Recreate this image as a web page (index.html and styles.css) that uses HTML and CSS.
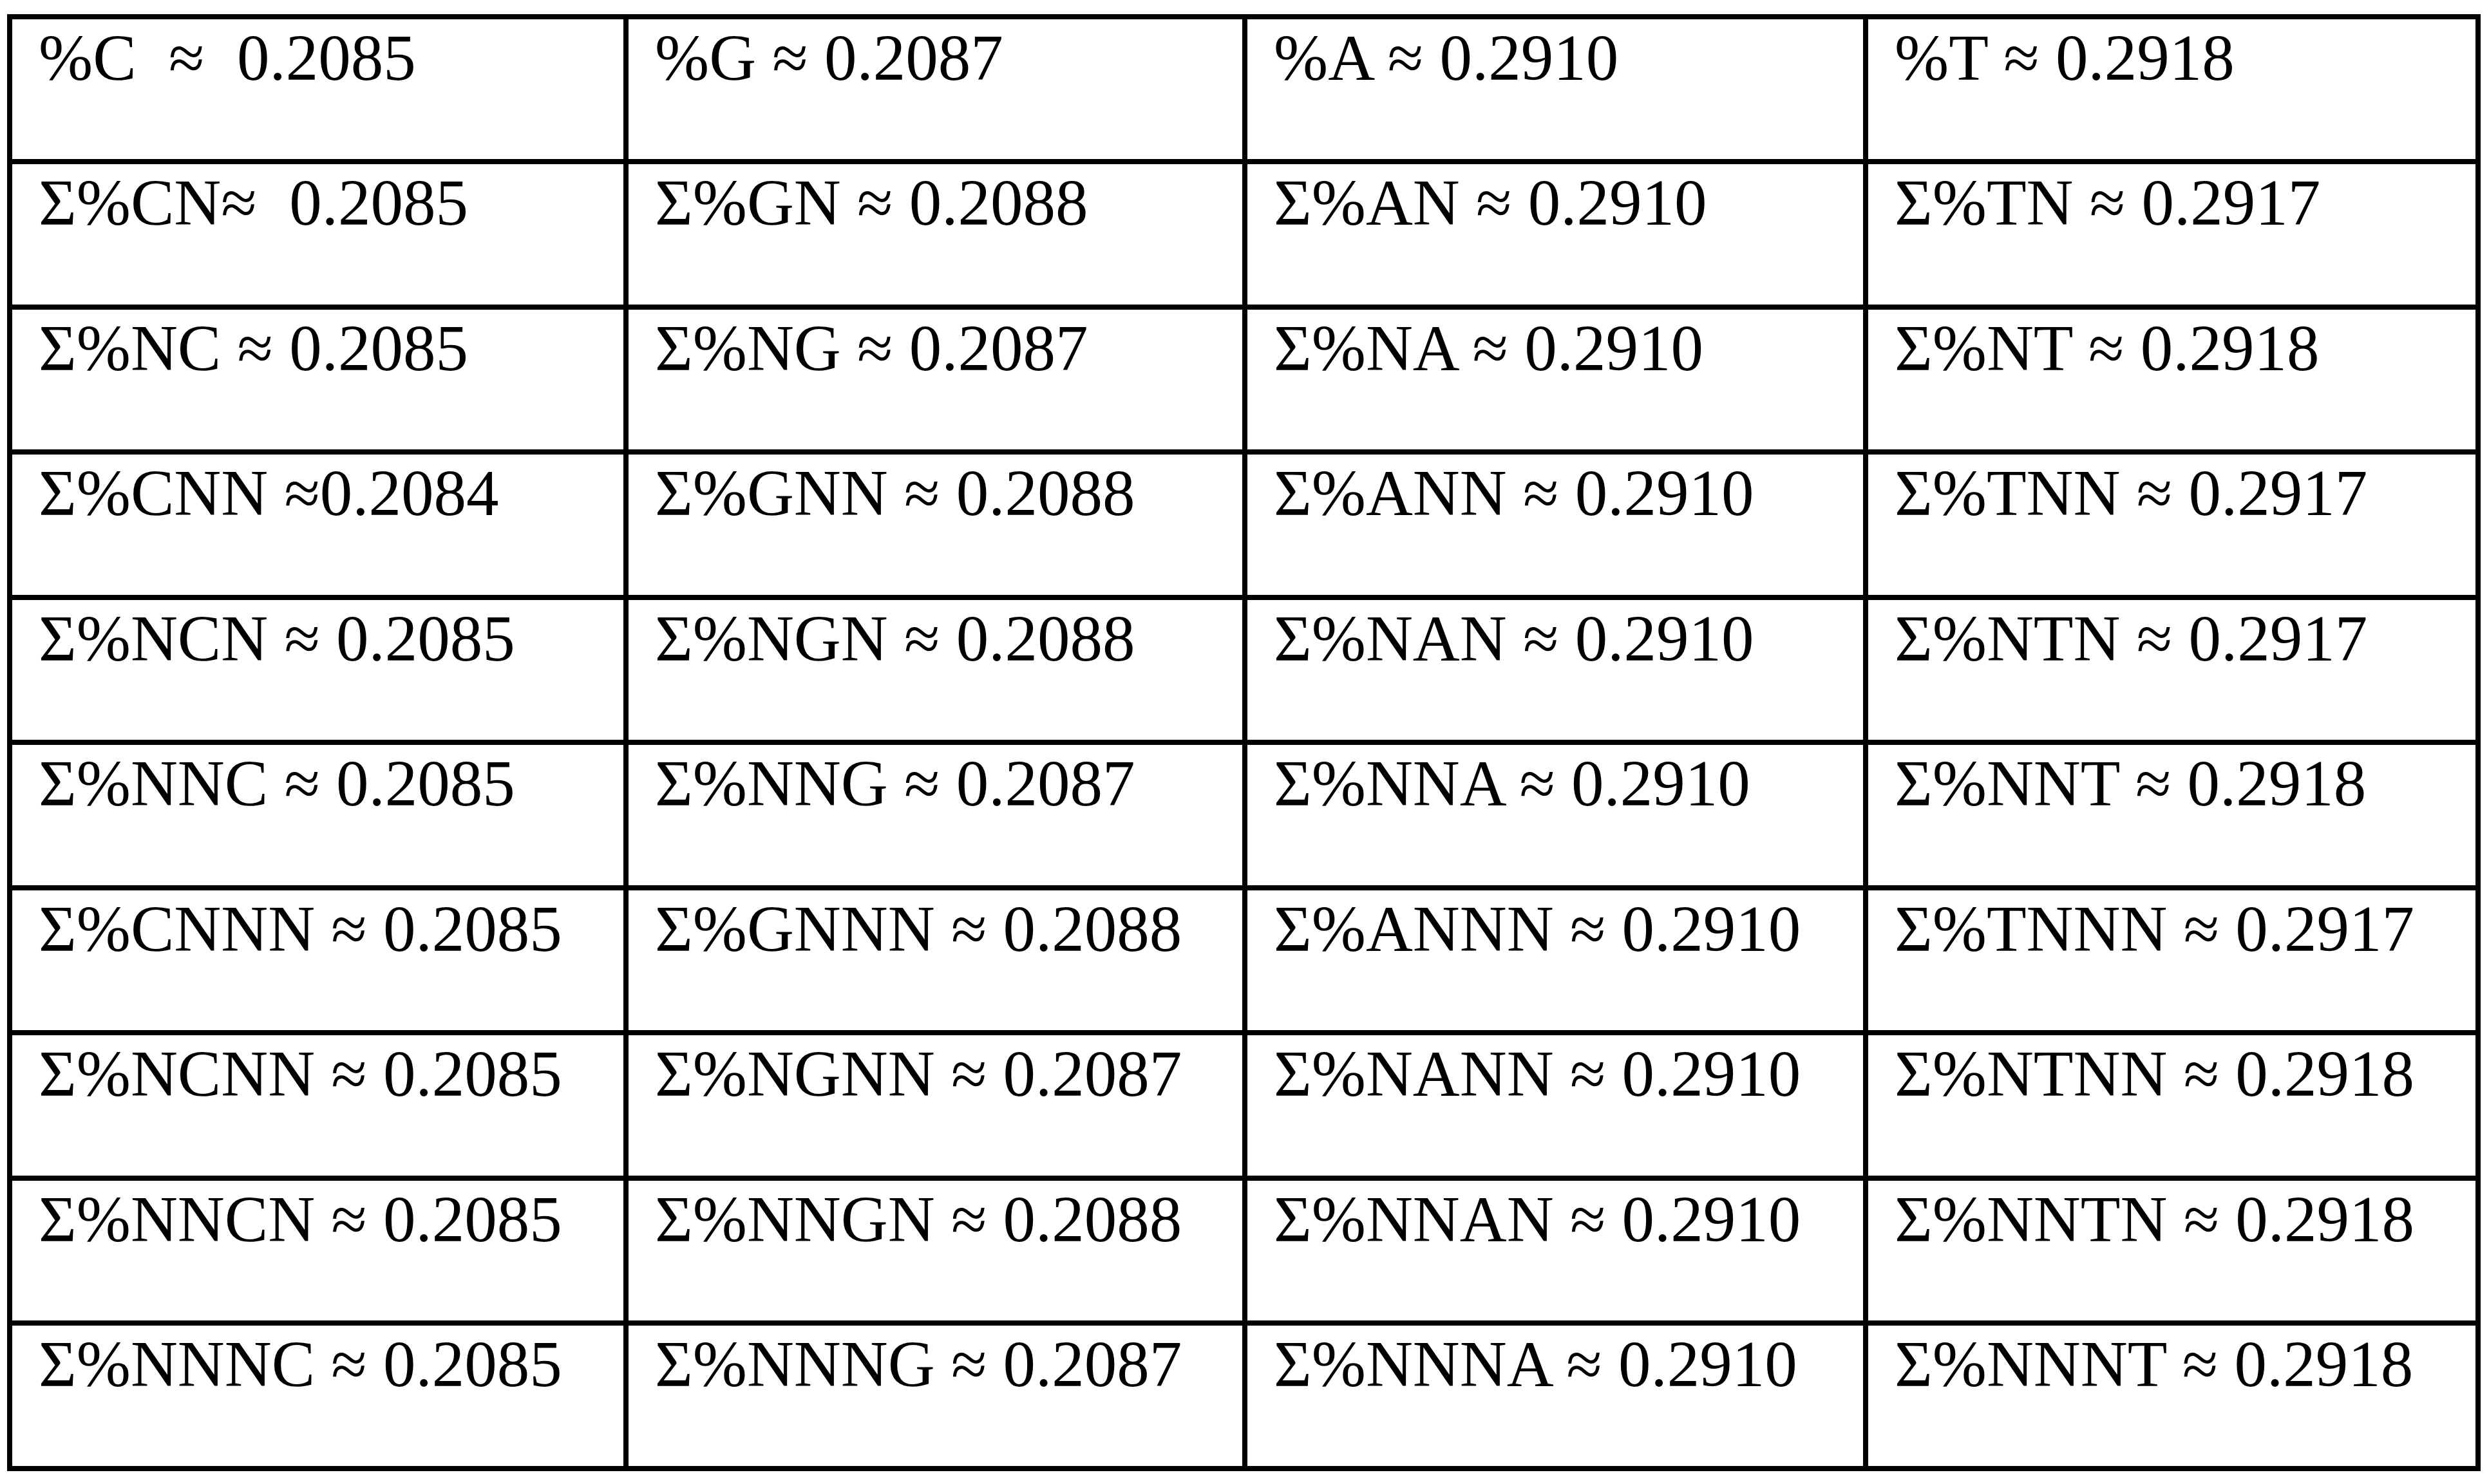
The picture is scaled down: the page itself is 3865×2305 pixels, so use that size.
FILE: index.html
```html
<!DOCTYPE html>
<html>
<head>
<meta charset="utf-8">
<title>Nucleotide frequencies</title>
<link rel="stylesheet" href="styles.css">
</head>
<body>
<div class="page">
<table class="grid">
<colgroup>
<col class="c1"><col class="c2"><col class="c3"><col class="c4">
</colgroup>
<tbody>
<tr class="ra"><td>%C  ≈  0.2085</td><td>%G ≈ 0.2087</td><td>%A ≈ 0.2910</td><td>%T ≈ 0.2918</td></tr>
<tr class="rb"><td>Σ%CN≈  0.2085</td><td>Σ%GN ≈ 0.2088</td><td>Σ%AN ≈ 0.2910</td><td>Σ%TN ≈ 0.2917</td></tr>
<tr class="ra"><td>Σ%NC ≈ 0.2085</td><td>Σ%NG ≈ 0.2087</td><td>Σ%NA ≈ 0.2910</td><td>Σ%NT ≈ 0.2918</td></tr>
<tr class="rb"><td>Σ%CNN ≈0.2084</td><td>Σ%GNN ≈ 0.2088</td><td>Σ%ANN ≈ 0.2910</td><td>Σ%TNN ≈ 0.2917</td></tr>
<tr class="ra"><td>Σ%NCN ≈ 0.2085</td><td>Σ%NGN ≈ 0.2088</td><td>Σ%NAN ≈ 0.2910</td><td>Σ%NTN ≈ 0.2917</td></tr>
<tr class="rb"><td>Σ%NNC ≈ 0.2085</td><td>Σ%NNG ≈ 0.2087</td><td>Σ%NNA ≈ 0.2910</td><td>Σ%NNT ≈ 0.2918</td></tr>
<tr class="ra"><td>Σ%CNNN ≈ 0.2085</td><td>Σ%GNNN ≈ 0.2088</td><td>Σ%ANNN ≈ 0.2910</td><td>Σ%TNNN ≈ 0.2917</td></tr>
<tr class="rb"><td>Σ%NCNN ≈ 0.2085</td><td>Σ%NGNN ≈ 0.2087</td><td>Σ%NANN ≈ 0.2910</td><td>Σ%NTNN ≈ 0.2918</td></tr>
<tr class="ra"><td>Σ%NNCN ≈ 0.2085</td><td>Σ%NNGN ≈ 0.2088</td><td>Σ%NNAN ≈ 0.2910</td><td>Σ%NNTN ≈ 0.2918</td></tr>
<tr class="rb"><td>Σ%NNNC ≈ 0.2085</td><td>Σ%NNNG ≈ 0.2087</td><td>Σ%NNNA ≈ 0.2910</td><td>Σ%NNNT ≈ 0.2918</td></tr>
</tbody>
</table>
</div>
</body>
</html>
```
FILE: styles.css
```css
html, body {
  margin: 0;
  padding: 0;
  background: #ffffff;
}
.page {
  padding: 22px 0 0 11px;
}
.grid {
  table-layout: fixed;
  width: 3841px;
  border-collapse: separate;
  border-spacing: 8px;
  background: #000000;
}
.c1 { width: 949px; }
.c2 { width: 953px; }
.c3 { width: 956px; }
.c4 { width: 943px; }
.ra { height: 217px; }
.rb { height: 218px; }
.grid td {
  background: #ffffff;
  box-sizing: border-box;
  padding: 3px 0 0 41px;
  vertical-align: top;
  white-space: pre;
  overflow: hidden;
  font-family: "Liberation Serif", "Times New Roman", serif;
  font-size: 101px;
  line-height: 115px;
  color: #000000;
}
```
